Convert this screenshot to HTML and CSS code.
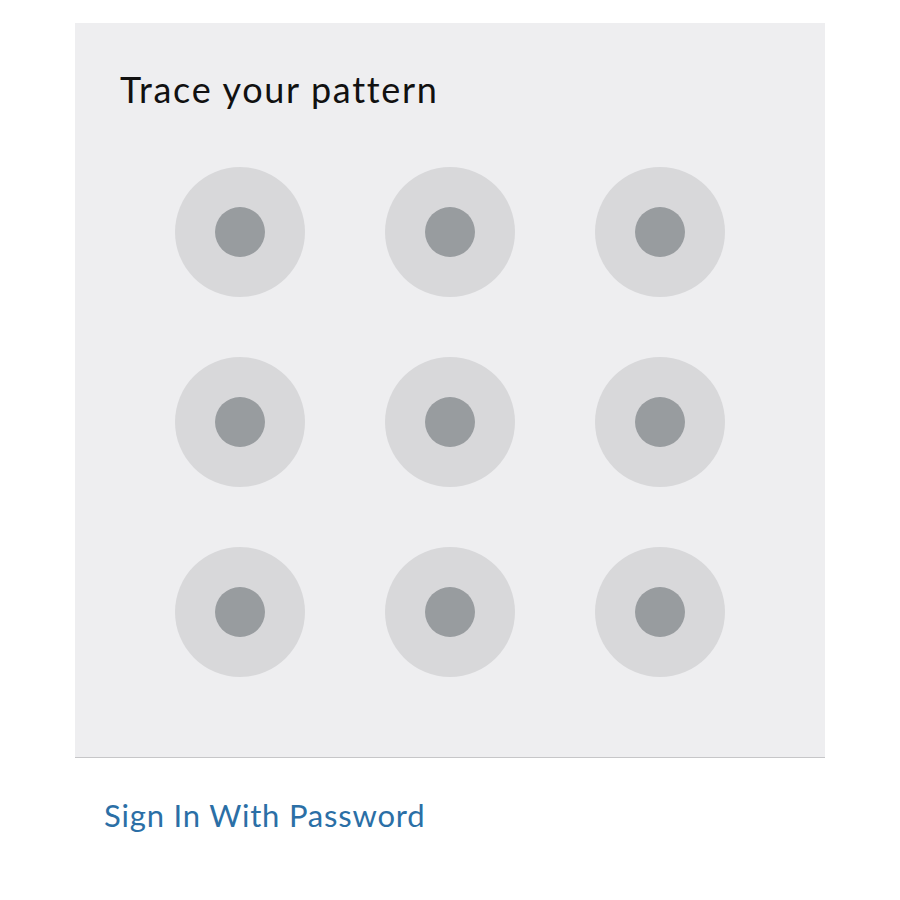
FILE: index.html
```html
<!DOCTYPE html>
<html lang="en">
<head>
  <meta charset="UTF-8">
  <meta name="viewport" content="width=device-width, initial-scale=1.0">
  <title>Trace your pattern</title>
  <link rel="stylesheet" href="styles.css">
</head>
<body>

<div class="pattern-panel">
  <h1 class="pattern-title">Trace your pattern</h1>
  <!-- 3x3 pattern grid -->
  <div class="pattern-grid">
    <div class="pattern-dot"><span class="dot-core"></span></div>
    <div class="pattern-dot"><span class="dot-core"></span></div>
    <div class="pattern-dot"><span class="dot-core"></span></div>
    <div class="pattern-dot"><span class="dot-core"></span></div>
    <div class="pattern-dot"><span class="dot-core"></span></div>
    <div class="pattern-dot"><span class="dot-core"></span></div>
    <div class="pattern-dot"><span class="dot-core"></span></div>
    <div class="pattern-dot"><span class="dot-core"></span></div>
    <div class="pattern-dot"><span class="dot-core"></span></div>
  </div>
</div>

<a class="password-link" href="#">Sign In With Password</a>

</body>
</html>
```

FILE: styles.css
```css
/* Pattern lock screen */
body {
  font-family: 'Lato', 'Open Sans', sans-serif;
  margin: 0;
  padding: 0;
  background-color: #fff;
}
.pattern-panel {
  width: 750px;
  margin: 23px 0 0 75px;
  padding: 44px 0 80px;
  box-sizing: border-box;
  background-color: #eeeef0;
  border-bottom: 1px solid #c6c6c8;
}
.pattern-title {
  margin: 0 0 0 45px;
  font-size: 36px;
  line-height: 44px;
  font-weight: normal;
  letter-spacing: 1.7px;
  color: #111;
}
.pattern-grid {
  display: grid;
  grid-template-columns: repeat(3, 130px);
  column-gap: 80px;
  row-gap: 60px;
  justify-content: center;
  margin-top: 56px;
}
.pattern-dot {
  width: 130px;
  height: 130px;
  border-radius: 50%;
  background-color: #d8d8da;
  display: flex;
  align-items: center;
  justify-content: center;
}
.dot-core {
  width: 50px;
  height: 50px;
  border-radius: 50%;
  background-color: #989c9f;
}
.password-link {
  display: inline-block;
  margin: 38px 0 0 104px;
  font-size: 31px;
  line-height: 38px;
  letter-spacing: 0.8px;
  color: #2b6fa6;
  text-decoration: none;
}
```
